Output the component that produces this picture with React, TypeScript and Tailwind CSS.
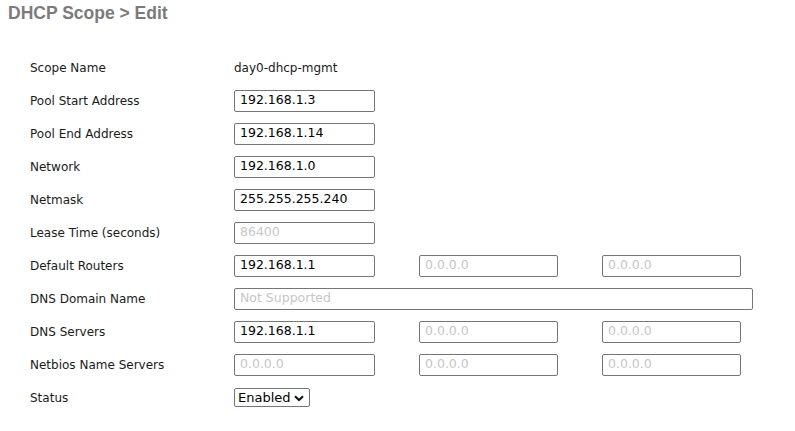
import React from 'react';

type Field = { value: string; muted?: boolean };

type Row = {
  label: string;
  text?: string;
  fields?: Field[];
  wide?: Field;
  select?: string;
};

const rows: Row[] = [
  { label: 'Scope Name', text: 'day0-dhcp-mgmt' },
  { label: 'Pool Start Address', fields: [{ value: '192.168.1.3' }] },
  { label: 'Pool End Address', fields: [{ value: '192.168.1.14' }] },
  { label: 'Network', fields: [{ value: '192.168.1.0' }] },
  { label: 'Netmask', fields: [{ value: '255.255.255.240' }] },
  { label: 'Lease Time (seconds)', fields: [{ value: '86400', muted: true }] },
  {
    label: 'Default Routers',
    fields: [{ value: '192.168.1.1' }, { value: '0.0.0.0', muted: true }, { value: '0.0.0.0', muted: true }]
  },
  { label: 'DNS Domain Name', wide: { value: 'Not Supported', muted: true } },
  {
    label: 'DNS Servers',
    fields: [{ value: '192.168.1.1' }, { value: '0.0.0.0', muted: true }, { value: '0.0.0.0', muted: true }]
  },
  {
    label: 'Netbios Name Servers',
    fields: [
      { value: '0.0.0.0', muted: true },
      { value: '0.0.0.0', muted: true },
      { value: '0.0.0.0', muted: true }
    ]
  },
  { label: 'Status', select: 'Enabled' }
];

const colWidths = ['w-[141px]', 'w-[139px]', 'w-[139px]'];
const colGaps = ['', 'ml-[44px]', 'ml-[44px]'];

function Box({ field, className }: { field: Field; className: string }) {
  return (
    <div
      className={`${className} h-[22px] border border-[#767676] rounded-[2px] bg-white flex items-center px-[5px] text-[12.5px] ${
        field.muted ? 'text-[#c6c6c6]' : 'text-black'
      }`}
    >
      {field.value}
    </div>
  );
}

export default function App() {
  return (
    <div className="min-h-screen bg-white pl-2 pt-[2px] font-['DejaVu_Sans',sans-serif] text-[#1a1a1a]">
      <h1 className="font-['Liberation_Sans',Arial,sans-serif] font-bold text-[17.5px] leading-[22px] text-[#7b7b7b]">
        DHCP Scope &gt; Edit
      </h1>

      <div className="mt-[27px] pl-[22px]">
        {rows.map((row) => (
          <div key={row.label} className="h-[33px] flex items-center">
            <div className="w-[204px] text-[12px]">{row.label}</div>
            {row.text && <div className="text-[12px]">{row.text}</div>}
            {row.fields &&
              row.fields.map((f, i) => (
                <Box key={i} field={f} className={`${colWidths[i]} ${colGaps[i]}`} />
              ))}
            {row.wide && <Box field={row.wide} className="w-[519px]" />}
            {row.select && (
              <div className="relative h-[19px] w-[76px] border border-[#767676] rounded-[2px] flex items-center pl-[3px] text-[13px] text-black">
                {row.select}
                <svg
                  className="absolute right-[5px] top-[6px]"
                  width="10"
                  height="7"
                  viewBox="0 0 10 7"
                  fill="none"
                  stroke="#111"
                  strokeWidth="2"
                >
                  <path d="M1 1.2 L5 5 L9 1.2" />
                </svg>
              </div>
            )}
          </div>
        ))}
      </div>
    </div>
  );
}
